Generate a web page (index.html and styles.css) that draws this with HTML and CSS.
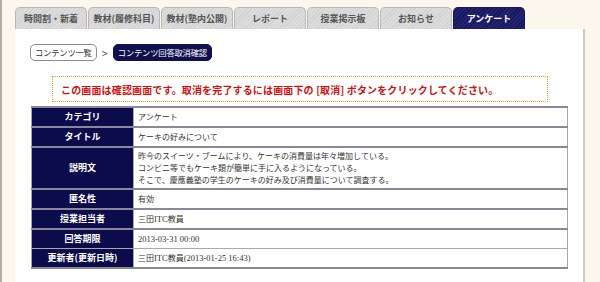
FILE: index.html
```html
<!DOCTYPE html>
<html lang="ja">
<head>
<meta charset="utf-8">
<title>アンケート</title>
<link rel="stylesheet" href="styles.css">
</head>
<body>
<div class="frame">
  <nav class="tabs">
    <span class="tab">時間割・新着</span>
    <span class="tab">教材(履修科目)</span>
    <span class="tab">教材(塾内公開)</span>
    <span class="tab">レポート</span>
    <span class="tab">授業掲示板</span>
    <span class="tab">お知らせ</span>
    <span class="tab tab-active">アンケート</span>
  </nav>
  <main class="panel">
    <div class="crumbs">
      <span class="crumb">コンテンツ一覧</span>
      <span class="sep">&gt;</span>
      <span class="crumb crumb-current">コンテンツ回答取消確認</span>
    </div>
    <div class="notice">この画面は確認画面です。取消を完了するには画面下の [取消] ボタンをクリックしてください。</div>
    <table class="info">
      <tr class="thick"><th>カテゴリ</th><td>アンケート</td></tr>
      <tr class="thick"><th>タイトル</th><td>ケーキの好みについて</td></tr>
      <tr class="thick tall"><th>説明文</th><td>昨今のスイーツ・ブームにより、ケーキの消費量は年々増加している。<br>コンビニ等でもケーキ類が簡単に手に入るようになっている。<br>そこで、慶應義塾の学生のケーキの好み及び消費量について調査する。</td></tr>
      <tr class="thick"><th>匿名性</th><td>有効</td></tr>
      <tr class="thick"><th>授業担当者</th><td>三田<span class="serif">ITC</span>教員</td></tr>
      <tr><th>回答期限</th><td><span class="serif">2013-03-31 00:00</span></td></tr>
      <tr class="thick"><th>更新者(更新日時)</th><td>三田<span class="serif">ITC</span>教員<span class="serif">(2013-01-25 16:43)</span></td></tr>
    </table>
  </main>
</div>
</body>
</html>
```

FILE: styles.css
```css
html, body {
  margin: 0;
  padding: 0;
}
body {
  width: 600px;
  height: 282px;
  overflow: hidden;
  font-family: "Noto Sans CJK JP", "DejaVu Sans", sans-serif;
  background: #fcf7ec;
}
.frame {
  height: 282px;
  box-sizing: border-box;
  border-left: 2px solid #b6aea4;
  padding: 7px 15px 0 13px;
  display: flex;
  flex-direction: column;
}
.tabs {
  display: flex;
  height: 22px;
}
.tab {
  width: 72px;
  margin-right: 1px;
  height: 22px;
  box-sizing: border-box;
  border: 1px solid #b8b8b8;
  border-bottom: none;
  border-radius: 5px 5px 0 0;
  background: repeating-linear-gradient(135deg, #d2d2d2 0 1px, #dcdcdc 1px 3px);
  color: #555;
  font-size: 9px;
  font-weight: bold;
  display: flex;
  align-items: center;
  justify-content: center;
  line-height: 1;
}
.tab-active {
  background: repeating-linear-gradient(135deg, #16165a 0 1px, #222270 1px 3px);
  border-color: #16165a;
  color: #fff;
}
.panel {
  flex: 1;
  background: #fff;
  border-right: 2px solid #cfcac4;
  padding: 15px 14px 0 15px;
}
.crumbs {
  display: flex;
  align-items: center;
  gap: 5px;
  height: 17px;
}
.crumb {
  height: 17px;
  box-sizing: border-box;
  padding: 0 4px;
  border: 1px solid #8a8a9a;
  border-radius: 5px;
  font-size: 8.3px;
  line-height: 15px;
  color: #333;
  letter-spacing: -0.2px;
}
.crumb-current {
  background: #10104e;
  border-color: #10104e;
  color: #fff;
}
.sep {
  font-size: 11px;
  color: #555;
}
.notice {
  margin: 15px 21px 0 22px;
  height: 26px;
  box-sizing: border-box;
  border: 1px dotted #e0a820;
  color: #d01010;
  font-size: 10px;
  font-weight: bold;
  display: flex;
  align-items: center;
  padding-left: 8px;
  letter-spacing: 0.15px;
}
.info {
  margin: 4px 0 0 1px;
  width: 537px;
  border-collapse: collapse;
  font-size: 8px;
  color: #333;
}
.info th, .info td {
  border: 1px solid #a8a6b2;
  height: 18px;
  padding: 0 4px;
  line-height: 12px;
}
.info tr.thick th, .info tr.thick td {
  border-bottom: 2px solid #8a8898;
}
.info tr:first-child th, .info tr:first-child td {
  border-top: 2px solid #8a8898;
}
.info th {
  width: 93px;
  background: #0c0c4c;
  color: #fff;
  font-size: 9px;
  font-weight: bold;
  text-align: center;
}
.info td {
  text-align: left;
}
.info tr.tall td, .info tr.tall th {
  height: 40px;
}
.serif {
  font-family: "Liberation Serif", serif;
  font-size: 8.5px;
}
```
